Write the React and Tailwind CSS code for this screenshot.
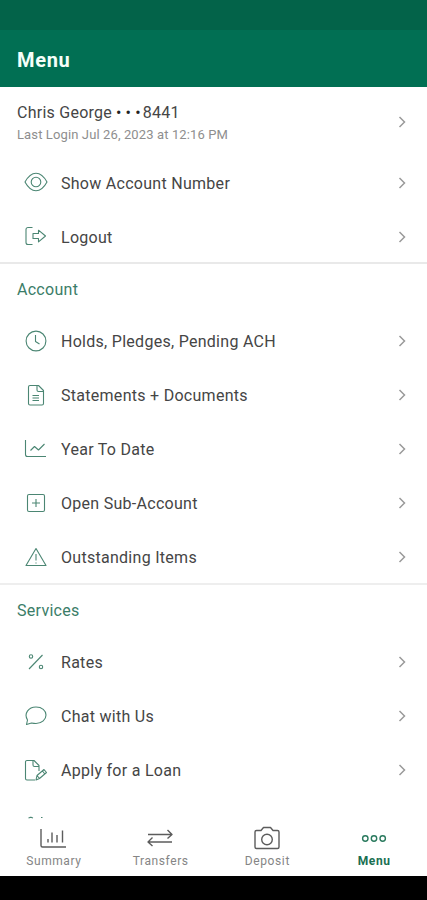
const icons = {
  eye: (
    <g transform="translate(0 -1)">
      <path d="M1 12C4 6.500 7.500 3.200 12 3.200S20 6.500 23 12C20 17.500 16.500 20.800 12 20.800S4 17.500 1 12Z" />
      <circle cx="12" cy="12" r="4.800" />
    </g>
  ),
  logout: (
    <g transform="translate(0 -1)">
      <path d="M8.500 3.500H4a2 2 0 0 0-2 2v13a2 2 0 0 0 2 2h4.500" />
      <path d="M9 9.500h5.500V6.200l7 5.800-7 5.800v-3.300H9Z" />
    </g>
  ),
  clock: (
    <>
      <circle cx="12" cy="12" r="9.900" />
      <path d="M11.500 6v6.500l4 2.500" />
    </>
  ),
  document: (
    <>
      <path d="M6 2.500h8.500l5 5v13a1.500 1.500 0 0 1-1.500 1.500H6a1.500 1.500 0 0 1-1.500-1.500V4A1.500 1.500 0 0 1 6 2.500Z" />
      <path d="M13 2.500v4.500a1.500 1.500 0 0 0 1.500 1.500h5M8.500 12.500h6.500M8.500 15h6.500M8.500 17.500h6.500" />
    </>
  ),
  chart: (
    <>
      <path d="M1.500 3v14.500a2 2 0 0 0 2 2H22" />
      <path d="M6.500 13.500l4-4 4 3.500 6-6" />
    </>
  ),
  plus: (
    <>
      <rect x="3.500" y="3.500" width="17" height="17" rx="1.500" />
      <path d="M12 8v8M8 12h8" />
    </>
  ),
  warning: (
    <>
      <path d="M12 3.500L22 20.500H2Z" />
      <path d="M12 9v6.500M12 17.500v1" />
    </>
  ),
  percent: (
    <>
      <path d="M5 19L18.500 5" />
      <circle cx="7" cy="6.500" r="1.700" />
      <circle cx="17" cy="17" r="1.700" />
    </>
  ),
  chat: (
    <path d="M2.500 20.500l1-4.500C-.5 9.500 4.500 3 12 3c6 0 10 3.500 10 8s-4 8.500-10 8.500c-1.500 0-3-.2-4.500-.5Z" />
  ),
  apply: (
    <>
      <path d="M11 22H3a1.500 1.500 0 0 1-1.500-1.500V4A1.500 1.500 0 0 1 3 2.500h7l5 5V13" />
      <path d="M9 2.500v4.500A1.500 1.500 0 0 0 10.500 8.500h4.500" />
      <path d="M12 22l1-4.500 7-6 2.500 3-7 6ZM13 17.500l2.500 3M18.500 13l2.300 3" />
    </>
  ),
  partial: <path d="M4.500 6l1.500-.6h1.500l1.500.6M17 5.500h1.500" />,
};

const tabIcons = {
  summary: (
    <path d="M2 3v16.500a1.500 1.500 0 0 0 1.500 1.500H27M9 16.500V13M13 16.500V6.500M18 16.500V9M23.500 16.500V4.500" />
  ),
  transfers: <path d="M2 8.500h24M21.500 4l4.500 4.500-4.500 4M26 16H2M6.500 11.500l-4.500 4.500 4.500 4" />,
  deposit: (
    <>
      <path d="M3.500 4.500H8L10.500 1.500h7L20 4.500h4.500A1.500 1.500 0 0 1 26 6v15a1.500 1.500 0 0 1-1.500 1.500h-21A1.500 1.500 0 0 1 2 21v-15A1.500 1.500 0 0 1 3.500 4.500Z" />
      <circle cx="14" cy="13.500" r="5.300" />
    </>
  ),
  menu: (
    <>
      <circle cx="5.300" cy="12.500" r="2.700" />
      <circle cx="14" cy="12.500" r="2.700" />
      <circle cx="22.700" cy="12.500" r="2.700" />
    </>
  ),
};

const sections = [
  {
    title: "Account",
    items: [
      { icon: "clock", label: "Holds, Pledges, Pending ACH" },
      { icon: "document", label: "Statements + Documents" },
      { icon: "chart", label: "Year To Date" },
      { icon: "plus", label: "Open Sub-Account" },
      { icon: "warning", label: "Outstanding Items" },
    ],
  },
  {
    title: "Services",
    items: [
      { icon: "percent", label: "Rates" },
      { icon: "chat", label: "Chat with Us" },
      { icon: "apply", label: "Apply for a Loan" },
      { icon: "partial", label: "" },
    ],
  },
];

const tabs = [
  { icon: "summary", label: "Summary" },
  { icon: "transfers", label: "Transfers" },
  { icon: "deposit", label: "Deposit" },
  { icon: "menu", label: "Menu", active: true },
];

const Chevron = () => (
  <svg
    className="h-3 w-2 shrink-0"
    viewBox="0 0 8 12"
    fill="none"
    stroke="#9a9a9a"
    strokeWidth="1.500"
  >
    <path d="M1.500 1l5 5-5 5" />
  </svg>
);

const Row = ({ icon, label }) => (
  <button className="flex h-[54px] w-full shrink-0 items-center pl-6 pr-[21px] text-left">
    <svg
      className="mb-0.5 h-6 w-6 shrink-0"
      viewBox="0 0 24 24"
      fill="none"
      stroke="#4b8673"
      strokeWidth="1.100"
      strokeLinejoin="round"
    >
      {icons[icon]}
    </svg>
    <span className="ml-[13px] flex-1 text-base tracking-[0.28px] text-[#454545]">{label}</span>
    {label && (
      <div className="mb-0.5">
        <Chevron />
      </div>
    )}
  </button>
);

const App = () => {
  return (
    <div className="flex h-[900px] w-full flex-col overflow-hidden bg-white font-['Roboto',sans-serif]">
      <div className="h-[30px] shrink-0 bg-[#036349]" />
      <header className="flex h-[57px] shrink-0 items-center bg-[#016f53] px-[17px] pt-0.5 text-xl font-bold tracking-[0.7px] text-[#f5fff9]">
        Menu
      </header>
      <main className="min-h-0 flex-1 overflow-hidden">
        <section className="border-b-2 border-[#e9e9e9]">
          <button className="flex h-[70px] w-full items-center justify-between pl-[17px] pr-[21px] text-left">
            <div className="pt-px">
              <p className="flex items-center text-base leading-6 tracking-[0.25px] text-[#454545]">
                Chris George
                <span className="ml-1 mr-[2px] tracking-[0.1px] text-[#222222]">• • •</span>
                8441
              </p>
              <p className="text-[13px] leading-5 tracking-[0.12px] text-[#8e8e8e]">
                Last Login Jul 26, 2023 at 12:16 PM
              </p>
            </div>
            <Chevron />
          </button>
          <Row icon="eye" label="Show Account Number" />
          <div className="-mb-[3px]">
            <Row icon="logout" label="Logout" />
          </div>
        </section>
        {sections.map(({ title, items }) => (
          <section key={title} className="border-b-2 border-[#eeeeee]">
            <h2 className="flex h-[51px] items-center px-[17px] pt-px text-base tracking-[0.28px] text-[#3b7d68]">
              {title}
            </h2>
            <div className="-mb-0.5">
              {items.map((item) => (
                <Row key={item.icon} {...item} />
              ))}
            </div>
          </section>
        ))}
      </main>
      <nav className="grid h-[57px] shrink-0 grid-cols-4 bg-white">
        {tabs.map(({ icon, label, active }) => (
          <button
            key={label}
            className={`flex flex-col items-center pt-[7px] text-xs tracking-[0.6px] ${
              active ? "font-bold text-[#1a7052]" : "text-[#858585]"
            }`}
          >
            <svg
              className="h-6 w-7"
              viewBox="0 0 28 24"
              fill="none"
              stroke={active ? "#2a7a5e" : "#5c5c5c"}
              strokeWidth="1.400"
              strokeLinejoin="round"
            >
              {tabIcons[icon]}
            </svg>
            <span className="mt-[3px] pl-px leading-4">{label}</span>
          </button>
        ))}
      </nav>
      <div className="h-6 shrink-0 bg-black" />
    </div>
  );
};

export default App;
